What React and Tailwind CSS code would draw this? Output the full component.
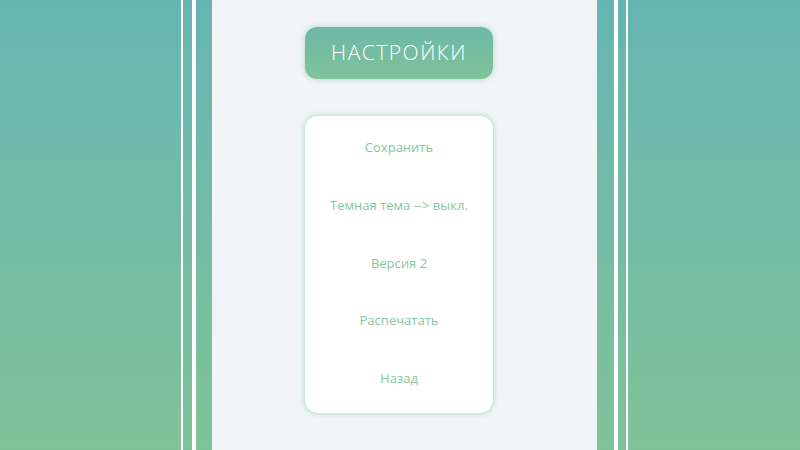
import React from "react";

const items = ["Сохранить", "Темная тема --> выкл.", "Версия 2", "Распечатать", "Назад"];

const App = () => {
  return (
    <div
      className="w-[800px] h-[450px] flex bg-gradient-to-b from-[#67b5b3] to-[#80c298] overflow-hidden"
      style={{ fontFamily: '"Open Sans", "Noto Sans", sans-serif' }}
    >
      {/* left stripes */}
      <div className="flex-1" />
      <div className="w-[2px] bg-white" />
      <div className="w-[9px]" />
      <div className="w-[4px] bg-white" />
      <div className="w-[16px]" />

      {/* main panel */}
      <div className="w-[385px] bg-[#f2f5f8] flex flex-col items-center pr-[11px] pt-[27px]">
        <div className="w-[188px] h-[52px] rounded-[12px] bg-gradient-to-b from-[#6cb8a8] to-[#80c39a] shadow-[0_0_6px_rgba(120,190,150,0.55)] flex items-center justify-center">
          <span className="text-white text-[21px] font-light tracking-[1.5px]">НАСТРОЙКИ</span>
        </div>

        <div className="mt-[36px] w-[190px] h-[299px] bg-white rounded-[14px] border border-[#cde8d8] shadow-[0_0_5px_rgba(128,194,154,0.5)] flex flex-col pt-[3px]">
          {items.map((item) => (
            <div
              key={item}
              className="h-[57.75px] flex items-center justify-center text-[13px] text-[#86c7a1]"
            >
              {item}
            </div>
          ))}
        </div>
      </div>

      {/* right stripes */}
      <div className="w-[17px]" />
      <div className="w-[4px] bg-white" />
      <div className="w-[8px]" />
      <div className="w-[2px] bg-white" />
      <div className="w-[172px]" />
    </div>
  );
};

export default App;
